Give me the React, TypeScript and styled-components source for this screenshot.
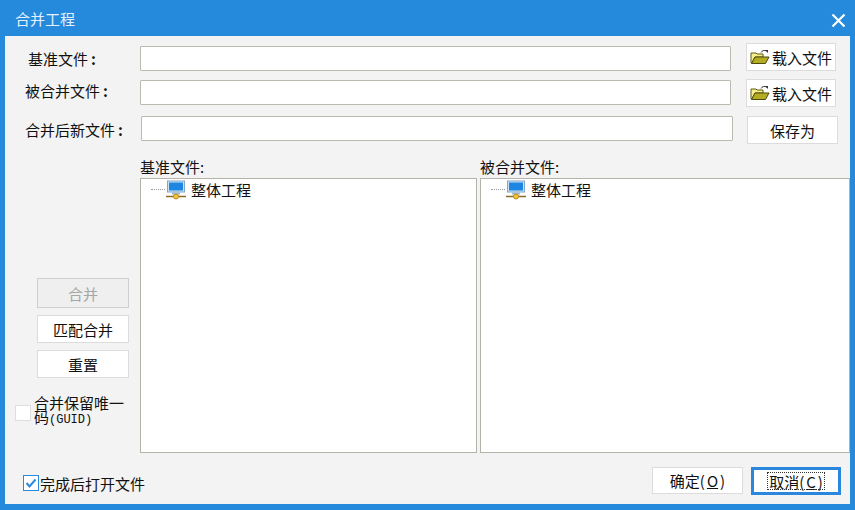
import styled, { createGlobalStyle } from "styled-components";

const GlobalStyle = createGlobalStyle`
  html, body {
    margin: 0;
    padding: 0;
    background: #2589dc;
  }
  body {
    font-family: "Noto Sans CJK SC", "Liberation Sans", sans-serif;
    font-size: 15px;
    color: #111;
  }
`;

const Window = styled.div`
  width: 855px;
  height: 510px;
  background: #2589dc;
  display: flex;
  flex-direction: column;
  overflow: hidden;
`;

const TitleBar = styled.div`
  height: 36px;
  flex: none;
  display: flex;
  align-items: center;
  justify-content: space-between;
  padding: 0 9px 0 15px;
  color: #e4f1fb;
  font-size: 15px;
`;

const CloseIcon = styled.svg`
  width: 15px;
  height: 15px;
  margin-top: 4px;
  stroke: #fff;
  stroke-width: 2.2;
`;

const Client = styled.div`
  flex: 1;
  margin: 0 5px 6px;
  background: #f3f3f3;
  display: flex;
  flex-direction: column;
`;

const FileRow = styled.div<{ $top: number }>`
  display: flex;
  align-items: flex-start;
  height: 28px;
  margin-top: ${(p) => p.$top}px;
`;

const FileLabel = styled.div<{ $indent: number; $top: number; $width: number }>`
  width: ${(p) => p.$width}px;
  box-sizing: border-box;
  padding-left: ${(p) => p.$indent}px;
  padding-top: ${(p) => p.$top}px;
  line-height: 20px;
  white-space: nowrap;
`;

const Colon = styled.span`
  margin-left: 3px;
  font-weight: 700;
`;

const PathInput = styled.input<{ $top: number; $width: number }>`
  width: ${(p) => p.$width}px;
  height: 25px;
  box-sizing: border-box;
  margin: ${(p) => p.$top}px 0 0;
  padding: 0 4px;
  background: #fff;
  border: 1px solid #bcb9ae;
  border-radius: 1px;
  outline: none;
`;

const Button = styled.button<{ $width?: number; $height?: number }>`
  width: ${(p) => p.$width ?? 92}px;
  height: ${(p) => p.$height ?? 28}px;
  flex: none;
  box-sizing: border-box;
  padding: 0;
  display: flex;
  align-items: center;
  justify-content: center;
  gap: 2px;
  background: #fff;
  border: 1px solid #dcdcdc;
  border-radius: 0;
  color: #111;
  font-family: inherit;
  font-size: 15px;
  line-height: 1;

  &:disabled {
    background: #efefef;
    border-color: #cfcfcf;
    color: #a6a6a6;
  }
`;

const LoadButton = styled(Button)`
  margin-left: 15px;
`;

const SaveButton = styled(Button)`
  margin-left: 14px;
`;

const Main = styled.div`
  display: flex;
  height: 295px;
  margin-top: 14px;
  flex: none;
`;

const SideColumn = styled.div`
  width: 135px;
  flex: none;
  box-sizing: border-box;
  padding: 120px 0 0 10px;
  display: flex;
  flex-direction: column;
`;

const SideButtons = styled.div`
  display: flex;
  flex-direction: column;
  gap: 7px;
  margin-left: 22px;
`;

const GuidOption = styled.div`
  display: flex;
  align-items: center;
  gap: 3px;
  margin-top: 20px;
  font-size: 15px;
  line-height: 14px;
`;

const Box = styled.span<{ $checked?: boolean }>`
  width: 16px;
  height: 16px;
  flex: none;
  box-sizing: border-box;
  display: inline-flex;
  background: #fff;
  border: 1px solid ${(p) => (p.$checked ? "#2b8ae0" : "#dedede")};
`;

const GuidText = styled.div`
  width: 92px;
  margin-top: -2px;
`;

const GuidCode = styled.span`
  font-family: "Liberation Mono", monospace;
  font-size: 12px;
`;

const Pane = styled.div<{ $width: number; $gap: number }>`
  width: ${(p) => p.$width}px;
  margin-left: ${(p) => p.$gap}px;
  display: flex;
  flex-direction: column;
`;

const PaneLabel = styled.div`
  height: 20px;
  line-height: 18px;
  font-size: 15px;
`;

const Tree = styled.div`
  flex: 1;
  box-sizing: border-box;
  background: #fff;
  border: 1px solid #b5b3a8;
  padding-left: 10px;
`;

const TreeNode = styled.div`
  display: flex;
  align-items: center;
  height: 21px;
  font-size: 15px;
`;

const TreeDots = styled.span`
  width: 14px;
  border-top: 1px dotted #9a9a9a;
`;

const NodeName = styled.span`
  margin-left: 4px;
`;

const Footer = styled.div`
  flex: 1;
  display: flex;
  align-items: flex-start;
  justify-content: space-between;
  padding: 14px 9px 0 18px;
`;

const OpenOption = styled.div`
  display: flex;
  align-items: center;
  height: 32px;
  gap: 1px;
  font-size: 15px;
`;

const FooterButtons = styled.div`
  display: flex;
  gap: 8px;
`;

const CancelButton = styled(Button)`
  border: 3px solid #2b87de;
  position: relative;

  &::after {
    content: "";
    position: absolute;
    inset: 2px 13px;
    border: 1px dotted #333;
  }
`;

const Underlined = styled.span`
  text-decoration: underline;
`;

function FolderIcon() {
  return (
    <svg width="20" height="16" viewBox="0 0 20 16">
      <path d="M1 4h5l1 1h6v3H5L2 14H1z" fill="#f6ee8e" stroke="#5f5a10" strokeWidth="1" />
      <path d="M5 8h14l-3.500 6.500H1.500z" fill="#b3ad24" stroke="#4f4a0c" strokeWidth="1" />
      <path d="M11 3.500C12 1.500 14.500 .8 16.500 2" fill="none" stroke="#333" strokeWidth="1" />
      <path d="M15 1h3v3z" fill="#333" />
    </svg>
  );
}

function NetworkIcon() {
  return (
    <svg width="22" height="20" viewBox="0 0 22 20">
      <rect x="2.500" y="1" width="17" height="11" fill="#cfe3f5" stroke="#7ea6c9" />
      <rect x="4" y="2.500" width="14" height="8" fill="#1c86e2" />
      <rect x="7" y="12.500" width="8" height="2" fill="#9db7cf" />
      <path d="M1 16.500h20" stroke="#8a6d1f" strokeWidth="1.500" />
      <circle cx="11" cy="16.500" r="2.500" fill="#f2c33d" stroke="#b98a17" />
    </svg>
  );
}

function CheckMark() {
  return (
    <svg width="14" height="14" viewBox="0 0 14 14">
      <path d="M2.500 7l3 3.500 6-7" fill="none" stroke="#2b8ae0" strokeWidth="2" />
    </svg>
  );
}

export default function App() {
  return (
    <>
      <GlobalStyle />
      <Window>
        <TitleBar>
          合并工程
          <CloseIcon viewBox="0 0 15 15">
            <path d="M1.500 1.500l12 12M13.500 1.500l-12 12" />
          </CloseIcon>
        </TitleBar>
        <Client>
          <FileRow $top={7}>
            <FileLabel $width={135} $indent={23} $top={6}>基准文件<Colon>:</Colon></FileLabel>
            <PathInput $top={3} $width={591} />
            <LoadButton $width={90}><FolderIcon />载入文件</LoadButton>
          </FileRow>
          <FileRow $top={8}>
            <FileLabel $width={135} $indent={20} $top={2}>被合并文件<Colon>:</Colon></FileLabel>
            <PathInput $top={1} $width={591} />
            <LoadButton $width={90}><FolderIcon />载入文件</LoadButton>
          </FileRow>
          <FileRow $top={9}>
            <FileLabel $width={136} $indent={20} $top={4}>合并后新文件<Colon>:</Colon></FileLabel>
            <PathInput $top={0} $width={592} />
            <SaveButton $width={91}>保存为</SaveButton>
          </FileRow>
          <Main>
            <SideColumn>
              <SideButtons>
                <Button disabled $height={30}>合并</Button>
                <Button>匹配合并</Button>
                <Button>重置</Button>
              </SideButtons>
              <GuidOption>
                <Box />
                <GuidText>合并保留唯一码<GuidCode>(GUID)</GuidCode></GuidText>
              </GuidOption>
            </SideColumn>
            <Pane $width={337} $gap={0}>
              <PaneLabel>基准文件:</PaneLabel>
              <Tree>
                <TreeNode><TreeDots /><NetworkIcon /><NodeName>整体工程</NodeName></TreeNode>
              </Tree>
            </Pane>
            <Pane $width={370} $gap={3}>
              <PaneLabel>被合并文件:</PaneLabel>
              <Tree>
                <TreeNode><TreeDots /><NetworkIcon /><NodeName>整体工程</NodeName></TreeNode>
              </Tree>
            </Pane>
          </Main>
          <Footer>
            <OpenOption>
              <Box $checked><CheckMark /></Box>
              完成后打开文件
            </OpenOption>
            <FooterButtons>
              <Button $width={91} $height={27}>确定(<Underlined>O</Underlined>)</Button>
              <CancelButton $width={90}>取消(<Underlined>C</Underlined>)</CancelButton>
            </FooterButtons>
          </Footer>
        </Client>
      </Window>
    </>
  );
}
